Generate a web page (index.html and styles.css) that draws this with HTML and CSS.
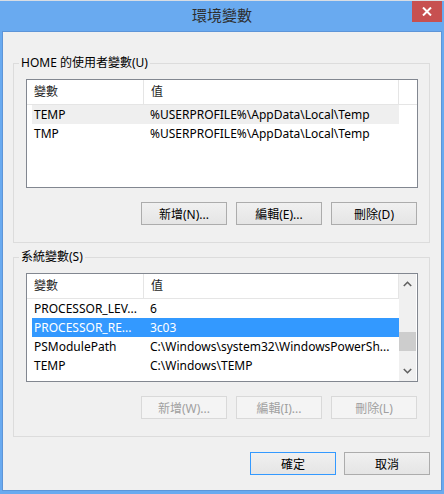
FILE: index.html
```html
<!DOCTYPE html>
<html lang="zh-Hant">
<head>
    <meta charset="UTF-8">
    <meta name="viewport" content="width=device-width, initial-scale=1.0">
    <title>環境變數</title>
    <link rel="stylesheet" href="styles.css">
</head>
<body>
    <div class="window">
        <div class="titlebar">
            <div class="title">環境變數</div>
            <button class="close-btn" aria-label="關閉">
                <svg width="10" height="9" viewBox="0 0 10 9">
                    <path d="M1 0.5 L9 8.5 M9 0.5 L1 8.5" stroke="#fff" stroke-width="2" fill="none"/>
                </svg>
            </button>
        </div>

        <div class="content">
            <fieldset class="group group-user">
                <legend>HOME 的使用者變數(U)</legend>
                <div class="list">
                    <div class="list-main">
                        <div class="list-head">
                            <div class="hcell col-name">變數</div>
                            <div class="hcell col-value">值</div>
                            <div class="hcell col-fill"></div>
                        </div>
                        <div class="row hover">
                            <div class="cell col-name">TEMP</div>
                            <div class="cell col-value">%USERPROFILE%\AppData\Local\Temp</div>
                        </div>
                        <div class="row">
                            <div class="cell col-name">TMP</div>
                            <div class="cell col-value">%USERPROFILE%\AppData\Local\Temp</div>
                        </div>
                    </div>
                </div>
                <div class="btn-row">
                    <button class="Button">新增(N)...</button>
                    <button class="Button">編輯(E)...</button>
                    <button class="Button">刪除(D)</button>
                </div>
            </fieldset>

            <fieldset class="group group-system">
                <legend>系統變數(S)</legend>
                <div class="list">
                    <div class="list-main">
                        <div class="list-head">
                            <div class="hcell col-name">變數</div>
                            <div class="hcell col-value">值</div>
                        </div>
                        <div class="row">
                            <div class="cell col-name">PROCESSOR_LEV...</div>
                            <div class="cell col-value">6</div>
                        </div>
                        <div class="row selected">
                            <div class="cell col-name">PROCESSOR_RE...</div>
                            <div class="cell col-value">3c03</div>
                        </div>
                        <div class="row">
                            <div class="cell col-name">PSModulePath</div>
                            <div class="cell col-value">C:\Windows\system32\WindowsPowerSh...</div>
                        </div>
                        <div class="row">
                            <div class="cell col-name">TEMP</div>
                            <div class="cell col-value">C:\Windows\TEMP</div>
                        </div>
                    </div>
                    <div class="scrollbar">
                        <div class="sb-arrow">
                            <svg width="9" height="6" viewBox="0 0 9 6">
                                <path d="M0.8 5 L4.5 1.3 L8.2 5" stroke="#606060" stroke-width="1.6" fill="none"/>
                            </svg>
                        </div>
                        <div class="sb-track">
                            <div class="sb-thumb"></div>
                        </div>
                        <div class="sb-arrow">
                            <svg width="9" height="6" viewBox="0 0 9 6">
                                <path d="M0.8 1 L4.5 4.7 L8.2 1" stroke="#606060" stroke-width="1.6" fill="none"/>
                            </svg>
                        </div>
                    </div>
                </div>
                <div class="btn-row">
                    <button class="Button" disabled>新增(W)...</button>
                    <button class="Button" disabled>編輯(I)...</button>
                    <button class="Button" disabled>刪除(L)</button>
                </div>
            </fieldset>

            <div class="dialog-btns">
                <button class="Button default">確定</button>
                <button class="Button">取消</button>
            </div>
        </div>
    </div>
</body>
</html>
```

FILE: styles.css
```css
* {
    box-sizing: border-box;
}

body {
    margin: 0;
    background: #69aaf0;
    font-family: "Noto Sans", "Noto Sans CJK TC", sans-serif;
    font-size: 12px;
    color: #000;
}

.window {
    width: 444px;
    height: 494px;
    display: flex;
    flex-direction: column;
    background: #69aaf0;
}

.titlebar {
    height: 31px;
    display: grid;
    grid-template-columns: 1fr auto 1fr;
    border-top: 1px solid #d8dde4;
}

.title {
    grid-column: 2;
    align-self: center;
    font-family: "Noto Sans CJK TC", sans-serif;
    font-size: 15px;
    line-height: 20px;
    color: #2d2d2d;
    margin-top: -2px;
}

.close-btn {
    grid-column: 3;
    justify-self: end;
    align-self: start;
    width: 30px;
    height: 21px;
    margin: 0 2px 0 0;
    padding: 0;
    border: none;
    background: #c75050;
    display: flex;
    align-items: center;
    justify-content: center;
}

.content {
    flex: 1;
    margin: 0 2px 3px 2px;
    background: #f0f0f0;
    border: 1px solid #5d95d8;
    display: flex;
    flex-direction: column;
}

.group {
    margin: 0 0 0 10px;
    width: 417px;
    border: 1px solid #dcdcdc;
    padding: 8px 11px 17px 12px;
}

.group-user {
    margin-top: 23px;
}

.group-system {
    margin-top: 6px;
}

legend {
    margin-left: -7px;
    padding: 0 2px;
    height: 16px;
    line-height: 16px;
}

.list {
    height: 109px;
    border: 1px solid #828790;
    background: #fff;
    display: flex;
    overflow: hidden;
}

.list-main {
    flex: 1;
    overflow: hidden;
}

.list-head {
    height: 25px;
    display: flex;
    border-bottom: 1px solid #e5e5e5;
}

.hcell {
    height: 24px;
    line-height: 24px;
    padding-left: 7px;
    border-right: 1px solid #e5e5e5;
    color: #1e1e1e;
    flex-shrink: 0;
}

.hcell.col-name {
    width: 117px;
}

.hcell.col-value {
    width: 255px;
}

.hcell.col-fill {
    flex: 1;
    border-right: none;
}

.row {
    width: 367px;
    height: 19px;
    margin-left: 5px;
    display: flex;
    line-height: 20px;
    white-space: nowrap;
}

.row.hover {
    background: #efefef;
}

.row.selected {
    background: #3399ff;
    color: #fff;
}

.cell {
    overflow: hidden;
}

.cell.col-name {
    width: 111px;
    padding-left: 2px;
    flex-shrink: 0;
}

.cell.col-value {
    flex: 1;
    padding-left: 7px;
}

.scrollbar {
    width: 18px;
    padding-right: 1px;
    background: #fff;
    display: flex;
    flex-direction: column;
}

.sb-arrow {
    height: 20px;
    background: #f0f0f0;
    display: flex;
    align-items: center;
    justify-content: center;
}

.sb-track {
    flex: 1;
    background: #f0f0f0;
}

.sb-thumb {
    height: 19px;
    margin-top: 38px;
    background: #cdcdcd;
}

.btn-row {
    display: flex;
    justify-content: flex-end;
    gap: 9px;
    margin-top: 14px;
    padding-right: 1px;
}

.Button {
    width: 86px;
    height: 23px;
    padding: 0;
    border: 1px solid #acacac;
    background: linear-gradient(#f0f0f0, #e5e5e5);
    font-family: "Noto Sans", "Noto Sans CJK TC", sans-serif;
    font-size: 12px;
    color: #000;
}

.Button:disabled {
    border-color: #d9d9d9;
    background: #f4f4f4;
    color: #a0a0a0;
}

.Button.default {
    border-color: #3399ff;
}

.dialog-btns {
    display: flex;
    justify-content: flex-end;
    gap: 8px;
    margin-top: 15px;
    padding-right: 11px;
}
```
